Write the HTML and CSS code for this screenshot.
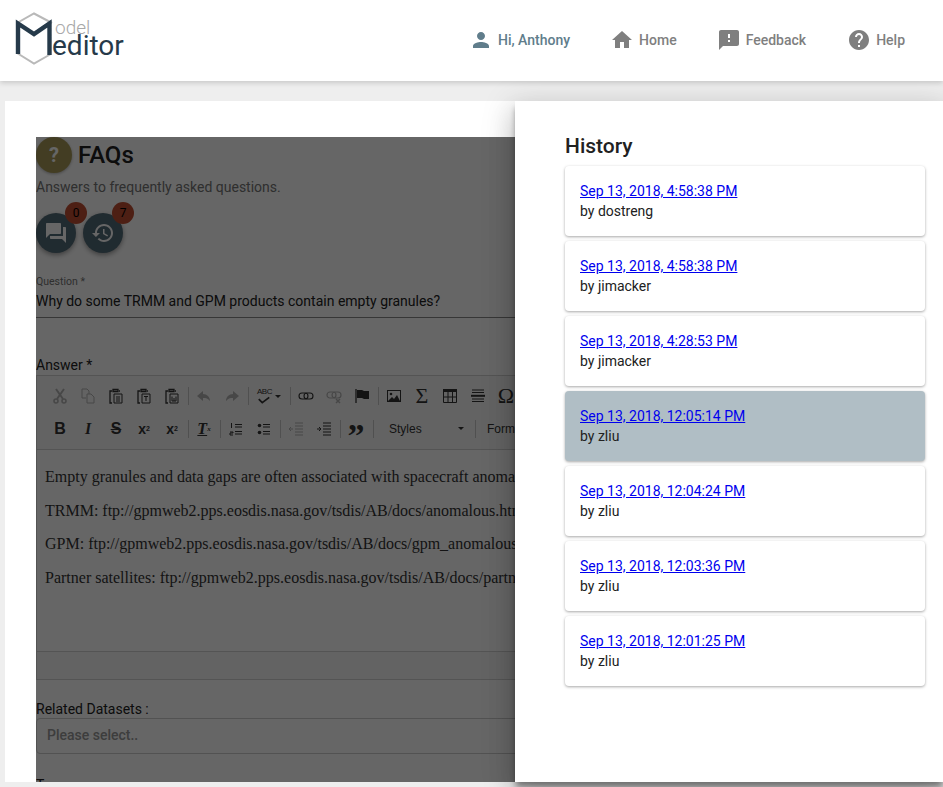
FILE: index.html
```html
<!DOCTYPE html>
<html lang="en">
  <head>
    <meta charset="UTF-8">
    <meta name="viewport" content="width=device-width, initial-scale=1.0">
    <title>Model Editor</title>
    <link rel="stylesheet" href="styles.css">
  </head>
  <body>
    <header class="topbar">
      <div class="logo">
        <svg class="logo-mark" width="40" height="56" viewBox="0 0 40 56">
          <path d="M3 12 L20 2.500 L38 12 M3 42 L20 52.500 L36 43.500" fill="none" stroke="#b9b9b9" stroke-width="2"/>
          <path d="M4 43 V12.500 L20 23 L35.500 12.500 V44" fill="none" stroke="#263a4a" stroke-width="4.400"/>
        </svg>
        <div class="logo-text">
          <span class="logo-top">odel</span>
          <span class="logo-bottom">editor</span>
        </div>
      </div>
      <nav class="nav">
        <a class="nav-link nav-user"><svg class="nav-icon" viewBox="0 0 24 24"><path d="M12 12c2.21 0 4-1.79 4-4s-1.79-4-4-4-4 1.79-4 4 1.79 4 4 4zm0 2c-2.67 0-8 1.34-8 4v2h16v-2c0-2.66-5.33-4-8-4z"/></svg>Hi, Anthony</a>
        <a class="nav-link"><svg class="nav-icon" viewBox="0 0 24 24"><path d="M10 20v-6h4v6h5v-8h3L12 3 2 12h3v8z"/></svg>Home</a>
        <a class="nav-link"><svg class="nav-icon" viewBox="0 0 24 24"><path d="M20 2H4c-1.1 0-1.99.9-1.99 2L2 22l4-4h14c1.1 0 2-.9 2-2V4c0-1.1-.9-2-2-2zm-7 12h-2v-2h2v2zm0-4h-2V6h2v4z"/></svg>Feedback</a>
        <a class="nav-link nav-help"><svg class="nav-icon" viewBox="0 0 24 24"><path d="M12 2C6.48 2 2 6.48 2 12s4.48 10 10 10 10-4.48 10-10S17.52 2 12 2zm1 17h-2v-2h2v2zm2.07-7.75l-.9.92C13.45 12.9 13 13.5 13 15h-2v-.5c0-1.1.45-2.1 1.17-2.83l1.24-1.26c.37-.36.59-.86.59-1.41 0-1.1-.9-2-2-2s-2 .9-2 2H8c0-2.21 1.79-4 4-4s4 1.79 4 4c0 .88-.36 1.68-.93 2.25z"/></svg>Help</a>
      </nav>
    </header>

    <main class="main">
      <div class="card">
        <div class="form">
          <div class="title-row">
            <span class="title-icon">?</span>
            <h2 class="title">FAQs</h2>
          </div>
          <p class="subtitle">Answers to frequently asked questions.</p>

          <div class="fabs">
            <span class="fab">
              <svg class="fab-icon" viewBox="0 0 24 24"><path d="M21 6h-2v9H6v2c0 .55.45 1 1 1h11l4 4V7c0-.55-.45-1-1-1zm-4 6V3c0-.55-.45-1-1-1H3c-.55 0-1 .45-1 1v14l4-4h10c.55 0 1-.45 1-1z"/></svg>
              <span class="badge">0</span>
            </span>
            <span class="fab">
              <svg class="fab-icon" viewBox="0 0 24 24"><path d="M13 3c-4.97 0-9 4.03-9 9H1l3.89 3.89.07.14L9 12H6c0-3.87 3.13-7 7-7s7 3.13 7 7-3.13 7-7 7c-1.93 0-3.68-.79-4.94-2.06l-1.42 1.42C8.27 19.99 10.51 21 13 21c4.97 0 9-4.03 9-9s-4.03-9-9-9zm-1 5v5l4.28 2.54.72-1.21-3.5-2.08V8H12z"/></svg>
              <span class="badge">7</span>
            </span>
          </div>

          <div class="question">
            <div class="question-label">Question *</div>
            <div class="question-value">Why do some TRMM and GPM products contain empty granules?</div>
          </div>

          <div class="answer-label">Answer *</div>
          <div class="editor">
            <div class="toolbar">
              <div class="tool-row">
                <span class="tool off"><svg viewBox="0 0 16 16"><circle cx="4" cy="13" r="2" fill="none" stroke-width="1.600"/><circle cx="12" cy="13" r="2" fill="none" stroke-width="1.600"/><path d="M5 11 L12 1 M11 11 L4 1" fill="none" stroke-width="2"/></svg></span>
                <span class="tool off"><svg viewBox="0 0 16 16"><path d="M2 1h5l2 2v3M2 1v9h4M7 6h4l3 3v6H7z" fill="none" stroke-width="1"/></svg></span>
                <span class="tool"><svg viewBox="0 0 16 16"><path d="M4 3H2v12h2M12 3h-1M5 1.500h5v2H5z" fill="none" stroke-width="1.300"/><path d="M6 6h8v9H6zM8 9h4M8 11h4M8 13h4" fill="none" stroke-width="1"/></svg></span>
                <span class="tool"><svg viewBox="0 0 16 16"><path d="M4 3H2v12h2M12 3h-1M5 1.500h5v2H5z" fill="none" stroke-width="1.300"/><path d="M6 6h8v9H6zM8 8.500h4M10 8.500V13" fill="none" stroke-width="1"/></svg></span>
                <span class="tool"><svg viewBox="0 0 16 16"><path d="M4 3H2v12h2M12 3h-1M5 1.500h5v2H5z" fill="none" stroke-width="1.300"/><path d="M6 6h8v9H6zM8 8.500V13h4V8.500M10 10v3" fill="none" stroke-width="1"/></svg></span>
                <span class="sep"></span>
                <span class="tool off"><svg viewBox="0 0 16 16"><path d="M7 3 L1 8 L7 13 V10 C10 10 12 10.500 14 13 C14 9 11 6 7 6z"/></svg></span>
                <span class="tool off"><svg viewBox="0 0 16 16"><path d="M9 3 L15 8 L9 13 V10 C6 10 4 10.500 2 13 C2 9 5 6 9 6z"/></svg></span>
                <span class="sep"></span>
                <span class="tool tool-spell"><span class="spell-text">ABC</span><svg class="spell-check" viewBox="0 0 16 8"><path d="M2 3 L6 7 L14 1" fill="none" stroke-width="2"/></svg><span class="caret"></span></span>
                <span class="sep"></span>
                <span class="tool"><svg viewBox="0 0 16 16"><rect x="1" y="5" width="9" height="6" rx="3" fill="none" stroke-width="1.100"/><rect x="6" y="5" width="9" height="6" rx="3" fill="none" stroke-width="1.100"/></svg></span>
                <span class="tool off"><svg viewBox="0 0 16 16"><rect x="1" y="4" width="9" height="6" rx="3" fill="none" stroke-width="1.200"/><rect x="6" y="4" width="9" height="6" rx="3" fill="none" stroke-width="1.200"/><path d="M10 11l4 4M14 11l-4 4" fill="none" stroke-width="1.500"/></svg></span>
                <span class="tool"><svg viewBox="0 0 16 16"><path d="M2 1v14" fill="none" stroke-width="1.300"/><path d="M3 2h5l2 1h5v8h-5l-2-1H3z"/></svg></span>
                <span class="sep"></span>
                <span class="tool"><svg viewBox="0 0 16 16"><rect x="1.500" y="2.500" width="13" height="11" fill="none" stroke-width="1"/><circle cx="5" cy="6" r="1.300"/><path d="M2 13 L6 9 L8 11 L11 7 L14 13z"/></svg></span>
                <span class="tool glyph-sigma">Σ</span>
                <span class="tool"><svg viewBox="0 0 16 16"><path d="M1 1h14v3H1z"/><path d="M1.500 4v10.500h13V4M1.500 9h13M6 4v10.500M10.500 4v10.500" fill="none" stroke-width="1"/></svg></span>
                <span class="tool"><svg viewBox="0 0 16 16"><path d="M2 2h12M2 4.500h12M2 11h12M2 13.500h12" fill="none" stroke-width="1"/><path d="M1 7.800h14" fill="none" stroke-width="2"/></svg></span>
                <span class="tool glyph-omega">Ω</span>
              </div>
              <div class="tool-row">
                <span class="tool glyph-b">B</span>
                <span class="tool glyph-i">I</span>
                <span class="tool glyph-s">S</span>
                <span class="tool glyph-x">x<sub>2</sub></span>
                <span class="tool glyph-x">x<sup>2</sup></span>
                <span class="sep"></span>
                <span class="tool glyph-tx"><span class="tx-t">T</span><sub>x</sub></span>
                <span class="sep"></span>
                <span class="tool"><svg viewBox="0 0 16 16"><path d="M7 3.500h7M7 6h7M7 10.500h7M7 13h7" fill="none" stroke-width="1"/><path d="M3.500 2v5M2 11h3v1H2v2h3" fill="none" stroke-width="1"/></svg></span>
                <span class="tool"><svg viewBox="0 0 16 16"><circle cx="3.500" cy="4.500" r="1.800"/><circle cx="3.500" cy="11.500" r="1.800"/><path d="M7 3.500h7M7 6h7M7 10.500h7M7 13h7" fill="none" stroke-width="1"/></svg></span>
                <span class="sep"></span>
                <span class="tool off"><svg viewBox="0 0 16 16"><path d="M7 2h8M7 5h8M7 8h8M7 11h8M7 14h8M1 8h4M3 6L1 8l2 2" fill="none" stroke-width="1"/></svg></span>
                <span class="tool"><svg viewBox="0 0 16 16"><path d="M7 2h8M7 5h8M7 8h8M7 11h8M7 14h8M1 8h4M3 6l2 2-2 2" fill="none" stroke-width="1"/></svg></span>
                <span class="sep"></span>
                <span class="tool glyph-quote">”</span>
                <span class="sep sep-wide"></span>
                <span class="combo combo-styles">Styles<span class="caret"></span></span>
                <span class="sep"></span>
                <span class="combo combo-format">Format<span class="caret"></span></span>
              </div>
            </div>
            <div class="editor-body">
              <p>Empty granules and data gaps are often associated with spacecraft anoma</p>
              <p>TRMM: ftp://gpmweb2.pps.eosdis.nasa.gov/tsdis/AB/docs/anomalous.htm</p>
              <p>GPM: ftp://gpmweb2.pps.eosdis.nasa.gov/tsdis/AB/docs/gpm_anomalous</p>
              <p>Partner satellites: ftp://gpmweb2.pps.eosdis.nasa.gov/tsdis/AB/docs/partn</p>
            </div>
            <div class="editor-foot"></div>
          </div>

          <div class="related-label">Related Datasets :</div>
          <div class="select">Please select..</div>
          <div class="tags-label">Tags</div>
          <div class="overlay"></div>
        </div>

        <aside class="drawer">
          <h3 class="drawer-title">History</h3>
          <div class="history">
            <div class="history-item"><a href="#">Sep 13, 2018, 4:58:38 PM</a><div>by dostreng</div></div>
            <div class="history-item"><a href="#">Sep 13, 2018, 4:58:38 PM</a><div>by jimacker</div></div>
            <div class="history-item"><a href="#">Sep 13, 2018, 4:28:53 PM</a><div>by jimacker</div></div>
            <div class="history-item selected"><a href="#">Sep 13, 2018, 12:05:14 PM</a><div>by zliu</div></div>
            <div class="history-item"><a href="#">Sep 13, 2018, 12:04:24 PM</a><div>by zliu</div></div>
            <div class="history-item"><a href="#">Sep 13, 2018, 12:03:36 PM</a><div>by zliu</div></div>
            <div class="history-item"><a href="#">Sep 13, 2018, 12:01:25 PM</a><div>by zliu</div></div>
          </div>
        </aside>
      </div>
    </main>
  </body>
</html>
```

FILE: styles.css
```css
html, body {
  height: 100%;
}

body {
  margin: 0;
  background-color: #eeeeee;
  font-family: Roboto, "Liberation Sans", sans-serif;
  color: #212121;
  overflow: hidden;
}

/* top bar */

.topbar {
  position: relative;
  z-index: 2;
  height: 81px;
  display: flex;
  align-items: center;
  justify-content: space-between;
  background-color: #fff;
  box-shadow: 0 2px 5px rgba(0, 0, 0, 0.16);
}

.logo {
  display: flex;
  margin-left: 14px;
  margin-bottom: 3px;
}

.logo-mark {
  display: block;
  flex: none;
}

.logo-text {
  display: flex;
  flex-direction: column;
  margin-left: -2px;
  padding-top: 8px;
}

.logo-top {
  font-weight: 300;
  font-size: 19px;
  line-height: 18px;
  color: #a8a8a8;
  margin-left: 3px;
}

.logo-bottom {
  margin-top: -2px;
  font-weight: 400;
  font-size: 28px;
  line-height: 22px;
  color: #263a4a;
}

.nav {
  display: flex;
  align-items: center;
  gap: 40px;
  margin-right: 38px;
  margin-bottom: 2px;
}

.nav-link {
  display: flex;
  align-items: center;
  gap: 5px;
  font-size: 14px;
  font-weight: 500;
  color: #7f7f7f;
}

.nav-user {
  color: #607d8b;
}

.nav-help {
  margin-left: 1px;
}

.nav-icon {
  width: 24px;
  height: 24px;
  fill: currentColor;
}

/* page card */

.main {
  padding: 20px 0 0 5px;
}

.card {
  position: relative;
  height: 681px;
  background-color: #fff;
}

.form {
  position: relative;
  width: 479px;
  height: 645px;
  padding-top: 36px;
  margin-left: 31px;
  overflow: hidden;
}

.overlay {
  position: absolute;
  top: 36px;
  left: 0;
  right: 0;
  bottom: 0;
  background-color: rgba(0, 0, 0, 0.6);
}

.title-row {
  display: flex;
  align-items: center;
  gap: 6px;
}

.title-icon {
  width: 36px;
  height: 36px;
  border-radius: 50%;
  background-color: #a89a58;
  box-shadow: 0 1px 3px rgba(0, 0, 0, 0.3);
  color: #fff;
  font-size: 20px;
  font-weight: 700;
  line-height: 36px;
  text-align: center;
}

.title {
  margin: 0;
  font-size: 24px;
  font-weight: 500;
  line-height: 36px;
}

.subtitle {
  margin: 6px 0 0;
  font-size: 14px;
  line-height: 16px;
  color: #757575;
}

.fabs {
  display: flex;
  gap: 7px;
  margin-top: 18px;
}

.fab {
  position: relative;
  width: 40px;
  height: 40px;
  border-radius: 50%;
  background-color: #526b78;
  box-shadow: 0 2px 5px rgba(0, 0, 0, 0.4);
  display: flex;
  align-items: center;
  justify-content: center;
}

.fab-icon {
  width: 24px;
  height: 24px;
  fill: #fff;
}

.badge {
  position: absolute;
  top: -11px;
  right: -11px;
  width: 22px;
  height: 22px;
  border-radius: 50%;
  background-color: #c04e32;
  font-size: 12px;
  line-height: 22px;
  text-align: center;
  color: #000;
}

.question {
  margin-top: 23px;
  height: 41px;
  border-bottom: 1px solid #8a8a8a;
}

.question-label {
  font-size: 10.5px;
  line-height: 12px;
  color: #757575;
}

.question-value {
  margin-top: 3px;
  font-size: 14px;
  line-height: 20px;
}

.answer-label {
  margin-top: 39px;
  font-size: 14px;
  line-height: 17px;
}

.editor {
  border: 1px solid #d1d1d1;
  border-right: 0;
  border-bottom: 0;
  margin-top: 1px;
}

.toolbar {
  height: 74px;
  padding: 3px 0 0 9px;
  box-sizing: border-box;
  border-bottom: 1px solid #d1d1d1;
  background-color: #f8f8f8;
}

.tool-row {
  display: flex;
  align-items: center;
  height: 33px;
}

.tool {
  flex: none;
  width: 28px;
  height: 18px;
  display: flex;
  align-items: center;
  justify-content: center;
  color: #333;
  font-size: 14px;
}

.tool svg {
  width: 16px;
  height: 16px;
  fill: #333;
  stroke: #333;
  stroke-width: 0;
}

.tool.off {
  opacity: 0.35;
}

.sep {
  flex: none;
  width: 1px;
  height: 18px;
  margin: 0 1.5px;
  background-color: #c8c8c8;
}

.sep-wide {
  margin: 0 2px 0 3px;
}

.tool-spell {
  position: relative;
  width: 38px;
  justify-content: flex-start;
  padding-left: 7px;
  box-sizing: border-box;
}

.spell-text {
  font-size: 8px;
  letter-spacing: -0.5px;
  line-height: 10px;
  font-family: "Liberation Sans", sans-serif;
  margin-top: -7px;
}

.tool-spell .spell-check {
  position: absolute;
  left: 7px;
  top: 9px;
  width: 14px;
  height: 8px;
}

.caret {
  width: 0;
  height: 0;
  border-left: 3px solid transparent;
  border-right: 3px solid transparent;
  border-top: 3px solid #333;
}

.tool-spell .caret {
  position: absolute;
  right: 7px;
  top: 8px;
}

.glyph-sigma, .glyph-omega {
  font-family: "Liberation Serif", serif;
  font-size: 22px;
}

.glyph-b, .glyph-i, .glyph-s {
  font-family: "Liberation Sans", sans-serif;
  font-size: 16px;
  font-weight: 700;
}

.glyph-i {
  font-family: "Liberation Serif", serif;
  font-style: italic;
}

.glyph-s {
  text-decoration: line-through;
}

.glyph-x {
  font-family: "Liberation Sans", sans-serif;
  font-weight: 700;
  font-size: 14px;
}

.glyph-x sub, .glyph-x sup, .glyph-tx sub {
  font-size: 7px;
  line-height: 0;
}

.glyph-tx {
  font-family: "Liberation Serif", serif;
  font-weight: 700;
  font-style: italic;
  font-size: 16px;
}

.tx-t {
  text-decoration: underline;
}

.glyph-quote {
  font-family: "Liberation Serif", serif;
  font-weight: 700;
  font-size: 34px;
  line-height: 18px;
  padding-top: 14px;
  box-sizing: border-box;
}

.combo {
  flex: none;
  width: 97px;
  box-sizing: border-box;
  padding: 0 9px 0 13px;
  display: flex;
  align-items: center;
  justify-content: space-between;
  font-family: "Liberation Sans", sans-serif;
  font-size: 12px;
  color: #333;
}

.combo-format {
  padding-left: 10px;
}

.editor-body {
  height: 201px;
  box-sizing: border-box;
  padding: 18px 0 0 8px;
  font-family: "Liberation Serif", serif;
  font-size: 16px;
  line-height: 18px;
  color: #333;
  white-space: nowrap;
}

.editor-body p {
  margin: 0 0 15.6px;
}

.editor-foot {
  height: 27px;
  border-top: 1px solid #d1d1d1;
  border-bottom: 1px solid #d1d1d1;
  background-color: #f8f8f8;
}

.related-label {
  margin-top: 21px;
  font-size: 14px;
  line-height: 17px;
}

/* runs on under the drawer */
.select {
  height: 36px;
  box-sizing: border-box;
  margin-right: -20px;
  padding-left: 10px;
  border: 1px solid #ccc;
  border-radius: 4px;
  font-size: 14px;
  font-weight: 500;
  line-height: 32px;
  color: #999;
}

.tags-label {
  margin-top: 23px;
  font-size: 14px;
  line-height: 17px;
}

/* history drawer */

.drawer {
  position: absolute;
  top: 0;
  right: 0;
  bottom: 0;
  width: 360px;
  padding: 33px 18px 0 50px;
  background-color: #fff;
  box-shadow: 0 6px 6px -1px rgba(0, 0, 0, 0.4), 0 16px 24px 2px rgba(0, 0, 0, 0.14), 0 6px 30px 5px rgba(0, 0, 0, 0.12);
}

.drawer-title {
  margin: 0 0 8px;
  font-size: 21px;
  font-weight: 500;
  line-height: 24px;
}

.history {
  display: flex;
  flex-direction: column;
  gap: 5px;
}

.history-item {
  height: 70px;
  box-sizing: border-box;
  padding: 15px;
  border-radius: 4px;
  background-color: #fff;
  box-shadow: 0 1px 3px rgba(0, 0, 0, 0.35);
  font-size: 14px;
  line-height: 20px;
}

.history-item a {
  color: #0000ee;
}

.history-item.selected {
  background-color: #b0bec5;
}
```
